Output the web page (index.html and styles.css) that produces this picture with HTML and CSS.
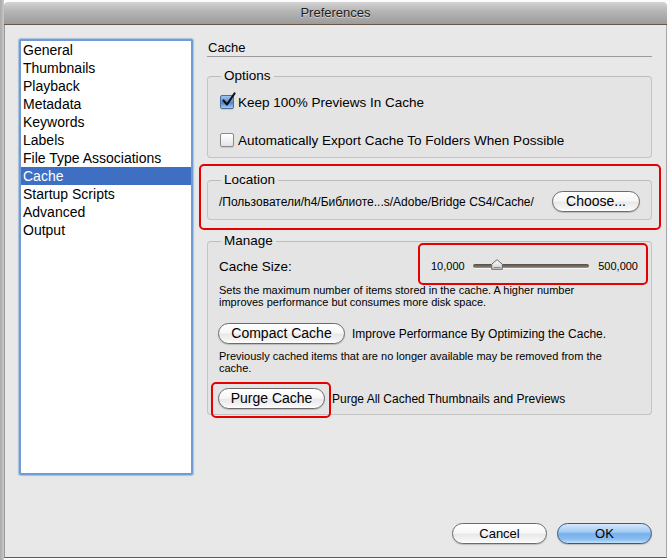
FILE: index.html
```html
<!DOCTYPE html>
<html>
<head>
<meta charset="utf-8">
<title>Preferences</title>
<link rel="stylesheet" href="styles.css">
</head>
<body>
<div class="window">
  <div class="titlebar">Preferences</div>
  <div class="content">
    <div class="main">
      <ul class="list">
        <li>General</li>
        <li>Thumbnails</li>
        <li>Playback</li>
        <li>Metadata</li>
        <li>Keywords</li>
        <li>Labels</li>
        <li>File Type Associations</li>
        <li class="selected">Cache</li>
        <li>Startup Scripts</li>
        <li>Advanced</li>
        <li>Output</li>
      </ul>
      <div class="panel">
        <div class="panel-title">Cache</div>
        <fieldset class="group options">
          <legend>Options</legend>
          <label class="check">
            <span class="box checked">
              <svg width="18" height="18" viewBox="0 0 18 18"><path d="M3.5 8.5 L7 12.5 L14.5 1.5" fill="none" stroke="#111" stroke-width="2.2" stroke-linecap="round" stroke-linejoin="round"/></svg>
            </span>
            Keep 100% Previews In Cache
          </label>
          <label class="check second">
            <span class="box"></span>
            Automatically Export Cache To Folders When Possible
          </label>
        </fieldset>
        <div class="hl hl-location">
          <fieldset class="group location">
            <legend>Location</legend>
            <div class="loc-row">
              <span class="path">/Пользователи/h4/Библиоте...s/Adobe/Bridge CS4/Cache/</span>
              <button class="btn btn-choose">Choose...</button>
            </div>
          </fieldset>
        </div>
        <fieldset class="group manage">
          <legend>Manage</legend>
          <div class="size-row">
            <span class="label">Cache Size:</span>
            <div class="hl hl-slider">
              <span class="num">10,000</span>
              <div class="slider">
                <div class="track"></div>
                <svg class="thumb" width="12" height="11" viewBox="0 0 12 11"><defs><linearGradient id="tg" x1="0" y1="0" x2="0" y2="1"><stop offset="0" stop-color="#ffffff"/><stop offset="1" stop-color="#cfcfcf"/></linearGradient></defs><path d="M6 0.7 L11.3 5.2 L11.3 10.3 L0.7 10.3 L0.7 5.2 Z" fill="url(#tg)" stroke="#6a6a6a" stroke-width="1"/><line x1="2.5" y1="8.5" x2="9.5" y2="8.5" stroke="#888" stroke-width="1"/></svg>
              </div>
              <span class="num">500,000</span>
            </div>
          </div>
          <p class="desc">Sets the maximum number of items stored in the cache. A higher number improves performance but consumes more disk space.</p>
          <div class="btn-row">
            <button class="btn btn-compact">Compact Cache</button>
            <span class="note">Improve Performance By Optimizing the Cache.</span>
          </div>
          <p class="desc desc2">Previously cached items that are no longer available may be removed from the cache.</p>
          <div class="purge-row">
            <div class="hl hl-purge">
              <button class="btn btn-purge">Purge Cache</button>
            </div>
            <span class="note purge-note">Purge All Cached Thumbnails and Previews</span>
          </div>
        </fieldset>
      </div>
    </div>
    <div class="footer">
      <button class="btn btn-footer">Cancel</button>
      <button class="btn btn-footer primary">OK</button>
    </div>
  </div>
</div>
</body>
</html>
```
FILE: styles.css
```css
* { box-sizing: border-box; }

html, body {
  margin: 0;
  padding: 0;
}

body {
  width: 670px;
  height: 560px;
  overflow: hidden;
  background: linear-gradient(to right, #a9a9a9 0, #c9c9c9 4px, #fbfbfb 4px);
  font-family: "Liberation Sans", Arial, sans-serif;
  color: #000;
}

.window {
  margin: 2px 0 0 4px;
  width: 663px;
  height: 556px;
  background: #e8e8e8;
  border-left: 1px solid #9a9a9a;
  border-right: 1px solid #a8a8a8;
  border-bottom: 1px solid #6c5a48;
  border-radius: 5px 5px 0 0;
  display: flex;
  flex-direction: column;
}

.titlebar {
  height: 23px;
  line-height: 22px;
  text-align: center;
  font-size: 13px;
  color: #1c1c1c;
  text-shadow: 0 1px 0 rgba(255,255,255,0.55);
  background: linear-gradient(#d4d4d4, #b6b6b6 40%, #9c9c9c);
  border-bottom: 1px solid #6a5646;
  border-radius: 5px 5px 0 0;
  margin: 0 -1px;
}

.content {
  height: 532px;
  padding: 14px 14px 13px 14px;
  display: flex;
  flex-direction: column;
}

.main {
  display: flex;
  align-items: flex-start;
}

/* Category list */
.list {
  list-style: none;
  margin: 0;
  padding: 0;
  width: 174px;
  height: 436px;
  background: #fff;
  border: 2px solid #6f9dd3;
  box-shadow: 0 0 1px 1px rgba(120,160,215,0.55);
  border-radius: 2px;
  font-size: 14px;
}

.list li {
  height: 18px;
  line-height: 18px;
  padding-left: 2px;
  white-space: nowrap;
}

.list li.selected {
  background: #3e6fc3;
  color: #fff;
}

/* Right panel */
.panel {
  width: 445px;
  margin-left: 14px;
}

.panel-title {
  height: 18px;
  line-height: 17px;
  font-size: 13px;
  padding-left: 1px;
  border-bottom: 1px solid #9c9c9c;
}

.group {
  margin: 0;
  min-width: 0;
  border: 1px solid #c4c4c4;
  border-top-color: #bdbdbd;
  border-radius: 4px;
  background: #e4e4e4;
  padding: 9px 11px 8px 11px;
}

.group legend {
  margin-left: 2px;
  padding: 0 3px;
  font-size: 13.5px;
  line-height: 16px;
}

.options {
  margin-top: 11px;
}

.check {
  display: flex;
  align-items: center;
  height: 18px;
  font-size: 13.5px;
  white-space: nowrap;
}

.check.second {
  margin-top: 20px;
}

.box {
  position: relative;
  width: 14px;
  height: 14px;
  margin-left: 1px;
  margin-right: 4px;
  border: 1px solid #8a8a8a;
  border-radius: 2px;
  background: linear-gradient(#ffffff, #f2f2f2 50%, #e2e2e2);
  box-shadow: 0 1px 1px rgba(0,0,0,0.12);
}

.box.checked {
  border-color: #4b6f9f;
  background: linear-gradient(#9cc3ee, #5f93d3 50%, #4d86cf 55%, #9ccaf3);
}

.box svg {
  position: absolute;
  left: -1px;
  top: -4px;
}

/* red annotation boxes */
.hl {
  border: 2px solid #e60000;
  border-radius: 5px;
}

.hl-location {
  margin: 6px -9px 0 -8px;
  padding: 6px 7px 8px 6px;
}

.location {
  padding-top: 3px;
  padding-bottom: 7px;
}

.loc-row {
  display: flex;
  align-items: center;
  justify-content: space-between;
  height: 21px;
}

.path {
  font-size: 12px;
  white-space: nowrap;
}

.manage {
  margin-top: 3px;
  padding-top: 8px;
}

.size-row {
  display: flex;
  align-items: center;
  justify-content: space-between;
  height: 18px;
}

.label {
  font-size: 13.5px;
}

.hl-slider {
  width: 230px;
  height: 42px;
  margin: 0 -8px 4px 0;
  padding: 4px 8px 0 11px;
  display: flex;
  align-items: center;
  justify-content: space-between;
}

.num {
  font-size: 11px;
}

.slider {
  position: relative;
  width: 116px;
  height: 12px;
  display: flex;
  align-items: center;
}

.track {
  width: 116px;
  height: 4px;
  border-radius: 2px;
  background: linear-gradient(#4d4d4d, #7d6e62 60%, #a69888);
  box-shadow: 0 1px 0 rgba(255,255,255,0.7);
}

.thumb {
  position: absolute;
  left: 18px;
  top: -1px;
}

.desc {
  margin: 9px 0 0 0;
  font-size: 11px;
  line-height: 12px;
  max-width: 395px;
}

.desc2 {
  margin-top: 6px;
}

.btn {
  height: 21px;
  padding: 0;
  border: 1px solid #6b6b6b;
  border-radius: 11px;
  background: linear-gradient(#ffffff, #f7f7f7 45%, #e9e9e9 55%, #f4f4f4 85%, #ffffff);
  box-shadow: 0 1px 1px rgba(0,0,0,0.18);
  font-family: "Liberation Sans", Arial, sans-serif;
  font-size: 13.5px;
  color: #000;
  line-height: 19px;
  text-align: center;
}

.btn-choose {
  width: 88px;
  font-size: 14px;
}

.btn-row {
  display: flex;
  align-items: center;
  margin-top: 15px;
  height: 21px;
}

.btn-compact {
  width: 127px;
  margin-left: -1px;
  font-size: 14px;
}

.note {
  font-size: 12px;
  margin-left: 7px;
  white-space: nowrap;
}

.purge-row {
  display: flex;
  align-items: flex-start;
  margin-top: 8px;
}

.hl-purge {
  margin: 0 0 -12px -8px;
  padding: 4px 4px 7px 5px;
}

.btn-purge {
  width: 107px;
  font-size: 14px;
  display: block;
}

.purge-note {
  margin-left: 1px;
  padding-top: 10px;
  line-height: 14px;
}

.footer {
  margin-top: auto;
  display: flex;
  justify-content: flex-end;
  gap: 10px;
}

.btn-footer {
  width: 95px;
  font-size: 13px;
}

.btn-footer.primary {
  border-color: #3f5777;
  background: linear-gradient(#d4e8fb, #a6cdf3 40%, #78b0ea 52%, #88bdf0 80%, #c4e2fc);
}
```
